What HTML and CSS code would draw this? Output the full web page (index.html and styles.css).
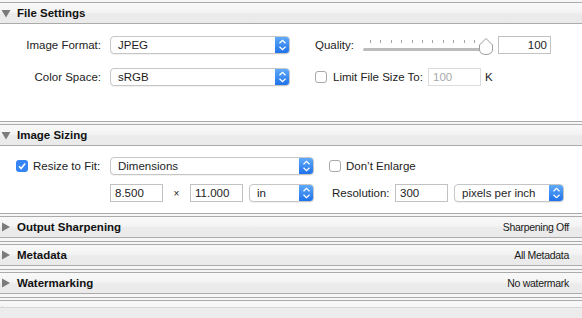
FILE: index.html
```html
<!DOCTYPE html>
<html lang="en">
<head>
  <meta charset="UTF-8" />
  <title>Export Settings</title>
  <link rel="stylesheet" href="styles.css">
</head>
<body>
  <div class="scroller">

    <!-- File Settings -->
    <section class="panel panel-first">
      <div class="panel-head">
        <svg class="twisty" width="10" height="9" viewBox="0 0 10 9"><polygon points="0.5,1 9.5,1 5,8.5" /></svg>
        <span class="panel-title">File Settings</span>
      </div>
      <div class="panel-body file-body">
        <div class="row">
          <span class="label">Image Format:</span>
          <div class="popup w180">
            <span class="popup-text">JPEG</span>
            <span class="stepper"><svg width="15" height="18" viewBox="0 0 15 18"><path d="M4.5 7.3 L7.5 4.3 L10.5 7.3 M4.5 10.7 L7.5 13.7 L10.5 10.7" /></svg></span>
          </div>
          <span class="quality-label">Quality:</span>
          <svg class="slider" width="131" height="20" viewBox="0 0 131 20">
            <g class="ticks">
              <rect x="7" y="5" width="1" height="3" />
              <rect x="17" y="5" width="1" height="3" />
              <rect x="28" y="5" width="1" height="3" />
              <rect x="38" y="5" width="1" height="3" />
              <rect x="49" y="5" width="1" height="3" />
              <rect x="59" y="5" width="1" height="3" />
              <rect x="69" y="5" width="1" height="3" />
              <rect x="80" y="5" width="1" height="3" />
              <rect x="90" y="5" width="1" height="3" />
              <rect x="101" y="5" width="1" height="3" />
              <rect x="111" y="5" width="1" height="3" />
            </g>
            <rect class="track" x="0" y="13" width="121" height="3" rx="1.5" />
            <path class="thumb" d="M123 3.5 L129.5 10 V14 Q129.5 19.5 123 19.5 Q116.5 19.5 116.5 14 V10 Z" />
          </svg>
          <span class="field num">100</span>
        </div>
        <div class="row">
          <span class="label">Color Space:</span>
          <div class="popup w180">
            <span class="popup-text">sRGB</span>
            <span class="stepper"><svg width="15" height="18" viewBox="0 0 15 18"><path d="M4.5 7.3 L7.5 4.3 L10.5 7.3 M4.5 10.7 L7.5 13.7 L10.5 10.7" /></svg></span>
          </div>
          <span class="check limit-check"></span>
          <span class="limit-label">Limit File Size To:</span>
          <span class="field disabled">100</span>
          <span class="unit">K</span>
        </div>
      </div>
    </section>

    <!-- Image Sizing -->
    <section class="panel">
      <div class="panel-head">
        <svg class="twisty" width="10" height="9" viewBox="0 0 10 9"><polygon points="0.5,1 9.5,1 5,8.5" /></svg>
        <span class="panel-title">Image Sizing</span>
      </div>
      <div class="panel-body sizing-body">
        <div class="row">
          <span class="check checked resize-check"><svg width="12" height="12" viewBox="0 0 12 12"><path d="M3 6.3 L5.1 8.5 L9.2 3.6" /></svg></span>
          <span class="resize-label">Resize to Fit:</span>
          <div class="popup w204">
            <span class="popup-text">Dimensions</span>
            <span class="stepper"><svg width="15" height="18" viewBox="0 0 15 18"><path d="M4.5 7.3 L7.5 4.3 L10.5 7.3 M4.5 10.7 L7.5 13.7 L10.5 10.7" /></svg></span>
          </div>
          <span class="check enlarge-check"></span>
          <span class="enlarge-label">Don’t Enlarge</span>
        </div>
        <div class="row dims-row">
          <span class="field">8.500</span>
          <span class="times">×</span>
          <span class="field">11.000</span>
          <div class="popup w65 unit-popup">
            <span class="popup-text">in</span>
            <span class="stepper"><svg width="15" height="18" viewBox="0 0 15 18"><path d="M4.5 7.3 L7.5 4.3 L10.5 7.3 M4.5 10.7 L7.5 13.7 L10.5 10.7" /></svg></span>
          </div>
          <span class="res-label">Resolution:</span>
          <span class="field">300</span>
          <div class="popup w110 res-popup">
            <span class="popup-text">pixels per inch</span>
            <span class="stepper"><svg width="15" height="18" viewBox="0 0 15 18"><path d="M4.5 7.3 L7.5 4.3 L10.5 7.3 M4.5 10.7 L7.5 13.7 L10.5 10.7" /></svg></span>
          </div>
        </div>
      </div>
    </section>

    <!-- Collapsed panels -->
    <section class="panel closed">
      <div class="panel-head">
        <svg class="twisty" width="10" height="10" viewBox="0 0 10 10"><polygon points="1,0.5 9,5 1,9.5" /></svg>
        <span class="panel-title">Output Sharpening</span>
        <span class="summary">Sharpening Off</span>
      </div>
    </section>

    <section class="panel closed">
      <div class="panel-head">
        <svg class="twisty" width="10" height="10" viewBox="0 0 10 10"><polygon points="1,0.5 9,5 1,9.5" /></svg>
        <span class="panel-title">Metadata</span>
        <span class="summary">All Metadata</span>
      </div>
    </section>

    <section class="panel closed">
      <div class="panel-head">
        <svg class="twisty" width="10" height="10" viewBox="0 0 10 10"><polygon points="1,0.5 9,5 1,9.5" /></svg>
        <span class="panel-title">Watermarking</span>
        <span class="summary">No watermark</span>
      </div>
    </section>

    <section class="panel closed">
      <div class="panel-head">
        <svg class="twisty" width="10" height="10" viewBox="0 0 10 10"><polygon points="1,0.5 9,5 1,9.5" /></svg>
        <span class="panel-title">Post-Processing</span>
        <span class="summary">Do nothing</span>
      </div>
    </section>

  </div>
  <div class="footer"></div>
</body>
</html>
```

FILE: styles.css
```css
body {
  margin: 0;
  background-color: #ececec;
  font-family: "Liberation Sans", Arial, sans-serif;
  font-size: 11.5px;
  color: #222222;
}

.scroller {
  height: 307px;
  overflow: hidden;
  background-color: #ffffff;
}

/* panels */

.panel {
  border-top: 1px solid #ababab;
  padding-top: 2px;
  background-color: #f6f6f6;
}

.panel-first {
  margin-top: -1px;
}

.panel.closed {
  padding-bottom: 3px;
}

.panel-head {
  display: flex;
  align-items: center;
  height: 20px;
  border-top: 1px solid #ababab;
  border-bottom: 1px solid #ababab;
  background-image: linear-gradient(to bottom, #f8f8f8 0%, #f4f4f4 45%, #ebebeb 55%, #eaeaea 100%);
}

.twisty {
  margin-left: 1px;
  flex: none;
}

.twisty polygon {
  fill: #7b7b7b;
}

.panel-title {
  margin-left: 6px;
  font-weight: bold;
  font-size: 11.5px;
  color: #111111;
}

.summary {
  margin-left: auto;
  padding-right: 13px;
  font-size: 10.5px;
  letter-spacing: -0.3px;
  color: #1a1a1a;
}

.panel-body {
  box-sizing: border-box;
  background-color: #ffffff;
  display: flex;
  flex-direction: column;
}

.file-body {
  height: 97px;
  padding-top: 12px;
  gap: 14px;
}

.sizing-body {
  height: 67px;
  padding-top: 11px;
  gap: 9px;
}

.row {
  display: flex;
  align-items: center;
  height: 18px;
  white-space: nowrap;
}

.label {
  box-sizing: border-box;
  width: 110px;
  padding-right: 9px;
  text-align: right;
}

/* popup buttons */

.popup {
  box-sizing: border-box;
  display: flex;
  align-items: center;
  height: 18px;
  border: 1px solid #c6c6c6;
  border-radius: 4px;
  background-color: #ffffff;
  box-shadow: 0 1px 1px rgba(0, 0, 0, 0.06);
  overflow: hidden;
  flex: none;
}

.w180 { width: 180px; }
.w204 { width: 204px; }
.w65 { width: 65px; }
.w110 { width: 110px; }

.popup-text {
  flex: 1;
  padding-left: 7px;
  color: #1e1e1e;
}

.stepper {
  display: flex;
  width: 15px;
  height: 18px;
  margin-right: -1px;
  margin-top: -1px;
  margin-bottom: -1px;
  border-radius: 0 4px 4px 0;
  background-image: linear-gradient(to bottom, #63aefc, #1b6ee8);
}

.stepper path {
  fill: none;
  stroke: #ffffff;
  stroke-width: 1.3;
}

/* fields */

.field {
  box-sizing: border-box;
  display: flex;
  align-items: center;
  width: 53px;
  height: 18px;
  padding: 0 4px;
  border: 1px solid #c2c2c2;
  background-color: #ffffff;
  flex: none;
}

.field.num {
  justify-content: flex-end;
  padding-right: 3px;
  margin-left: 4px;
}

.field.disabled {
  border-color: #dcdcdc;
  color: #a9a9a9;
}

.unit {
  margin-left: 4px;
}

/* quality */

.quality-label {
  width: 48px;
  margin-left: 25px;
  flex: none;
}

.slider {
  flex: none;
}

.ticks rect {
  fill: #a5a5a5;
}

.track {
  fill: #bcbcbc;
}

.thumb {
  fill: #ffffff;
  stroke: #9c9c9c;
  stroke-width: 1;
}

/* checkboxes */

.check {
  box-sizing: border-box;
  display: block;
  width: 12px;
  height: 12px;
  border: 1px solid #a9a9a9;
  border-radius: 3px;
  background-color: #ffffff;
  flex: none;
}

.check.checked {
  border: none;
  background-color: #3585f4;
}

.check svg {
  display: block;
}

.check path {
  fill: none;
  stroke: #ffffff;
  stroke-width: 1.6;
}

.limit-check {
  margin-left: 25px;
}

.limit-label {
  width: 95px;
  margin-left: 6px;
  flex: none;
}

.resize-check {
  margin-left: 16px;
}

.resize-label {
  width: 77px;
  margin-left: 5px;
  flex: none;
}

.enlarge-check {
  margin-left: 15px;
}

.enlarge-label {
  margin-left: 5px;
}

/* dimensions row */

.dims-row {
  padding-left: 110px;
}

.times {
  width: 27px;
  text-align: center;
  font-size: 10px;
  flex: none;
}

.unit-popup {
  margin-left: 6px;
}

.res-label {
  width: 63px;
  margin-left: 18px;
  flex: none;
}

.res-popup {
  margin-left: 6px;
}

.footer {
  height: 11px;
  border-top: 1px solid #d6d6d6;
  box-sizing: border-box;
  background-color: #ececec;
}
```
